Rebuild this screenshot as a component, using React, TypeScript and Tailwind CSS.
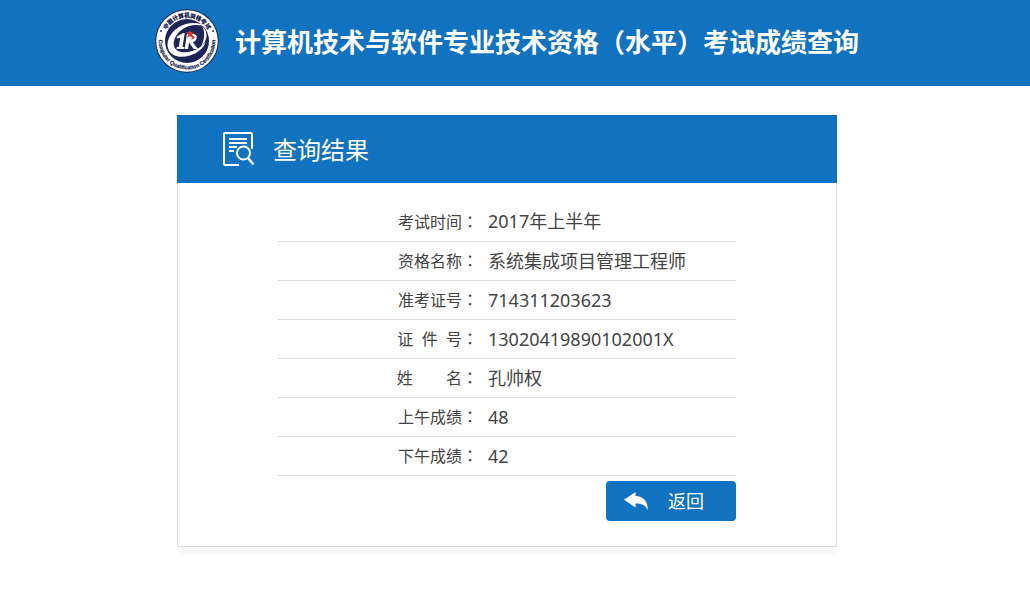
import React from "react";

type Row = { label: string; value: string };

const rows: Row[] = [
  { label: "考试时间", value: "2017年上半年" },
  { label: "资格名称", value: "系统集成项目管理工程师" },
  { label: "准考证号", value: "714311203623" },
  { label: "证\u00a0\u00a0件\u00a0\u00a0号", value: "13020419890102001X" },
  { label: "姓\u00a0\u00a0\u00a0\u00a0\u00a0\u00a0\u00a0\u00a0名", value: "孔帅权" },
  { label: "上午成绩", value: "48" },
  { label: "下午成绩", value: "42" },
];

function Seal() {
  return (
    <svg viewBox="0 0 64 64" className="h-16 w-16 shrink-0" role="img" aria-label="中国计算机资格考试">
      <defs>
        <path id="arc-top" d="M9.1 36 A23.3 23.3 0 1 1 54.9 36" />
        <path id="arc-bottom" d="M4.6 25.5 A28.2 28.2 0 1 0 59.4 25.5" />
      </defs>
      <circle cx="32" cy="32" r="31.7" fill="#1b2350" />
      <circle cx="32" cy="32" r="30.8" fill="#fff" />
      <text
        fontSize="5.6"
        fontWeight="900"
        fill="#1b2350"
        stroke="#1b2350"
        strokeWidth="0.2"
        textAnchor="middle"
        fontFamily="'Noto Sans CJK SC', sans-serif"
      >
        <textPath href="#arc-top" startOffset="50%">
          中国计算机资格考试
        </textPath>
      </text>
      <text
        fontSize="5.3"
        fontWeight="700"
        fill="#1b2350"
        stroke="#1b2350"
        strokeWidth="0.2"
        textAnchor="middle"
        fontFamily="'Liberation Sans', sans-serif"
      >
        <textPath href="#arc-bottom" startOffset="50%">
          Computer Qualification Certification
        </textPath>
      </text>
      <circle cx="6" cy="22" r="0.9" fill="#1b2350" />
      <circle cx="58" cy="22" r="0.9" fill="#1b2350" />
      <circle cx="32" cy="32" r="22" fill="#1d2456" />
      <path
        d="M53.500 19.500 C46 12.500 33 12.500 24 18 C14 24 9.500 35 14.500 42.500 C19.500 49.500 32 49 41 44 C46 41 49.500 37 50.500 33 C46 38.500 40 42 33 43 C25 44.200 19.500 41.500 18.800 36 C18 29.500 23 21.800 31.500 18 C39 15 47 15.500 53.500 19.500 Z"
        fill="#fff"
      />
      <path d="M47 17 C53.500 23 53 31 46 37.500 C49.500 31 50.500 23 47 17 Z" fill="#fff" />
      <path
        d="M22 27.500 L28 24 H29.800 L27.500 38 H29.500 L29.200 40 H21.500 L21.800 38 H23.800 L25.200 28.800 L21.800 29.500 Z"
        fill="#fff"
      />
      <path
        d="M31.800 25 H37.500 C41.500 25 42.300 27.500 41.500 29.800 C40.900 31.600 39.700 32.700 37.800 33.200 L43 40 H38.600 L34 33.500 L33 40 H29.800 Z"
        fill="#fff"
      />
      <path d="M31 23.500 L35 22.200 L39.500 24.500 L36.800 25.600 L40 28.500 L36.500 31 L36.800 28.500 L34.500 27 L32 29 L33.300 25.200 Z" fill="#d6362f" />
    </svg>
  );
}

function SearchDocIcon() {
  return (
    <svg viewBox="0 0 32 36" className="h-9 w-8 shrink-0" fill="none" stroke="#fff" strokeWidth="2" aria-hidden="true">
      <path d="M29 18 V3 Q29 2 28 2 H2 Q1 2 1 3 V33 Q1 34 2 34 H16" />
      <path d="M6 8 H24 M6 12 H24 M6 16 H14 M6 20 H11" />
      <circle cx="20.500" cy="22" r="6.500" />
      <path d="M25 27 L30.500 33.500" strokeWidth="2.500" />
    </svg>
  );
}

function ReplyIcon() {
  return (
    <svg viewBox="0 0 24 18" className="h-[18px] w-6 shrink-0" fill="#fff" aria-hidden="true">
      <path d="M0 7.800 L11.500 0 V4 C19 4.200 24 9 23.800 18 C21.500 13.300 17.500 11.600 11.500 11.600 V15.600 Z" />
    </svg>
  );
}

export default function App() {
  return (
    <div className="min-h-screen bg-white font-['Noto_Sans','Noto_Sans_CJK_SC',sans-serif] text-[#444]">
      <header className="bg-[#1172c0] pr-4">
        <div className="flex h-[86px] items-center justify-center gap-4 pb-1">
          <Seal />
          <h1 className="whitespace-nowrap font-['Noto_Sans_CJK_SC',sans-serif] text-[26px] font-bold leading-10 text-white">
            计算机技术与软件专业技术资格（水平）考试成绩查询
          </h1>
        </div>
      </header>

      <main className="pr-4 pt-[29px]">
        <section className="mx-auto w-full max-w-[660px] shadow-[0_8px_4px_-2px_#f4f4f4]">
          <div className="flex h-[68px] items-center gap-[18px] bg-[#1172c0] pl-[46px] text-white">
            <SearchDocIcon />
            <h2 className="pt-0.5 text-2xl leading-9">查询结果</h2>
          </div>

          <div className="border border-t-0 border-[#ddd] px-[100px] pb-[25px] pt-[19px]">
            <table className="w-full border-collapse">
              <tbody>
                {rows.map((row) => (
                  <tr key={row.label} className="h-[39px] border-b border-[#dcdcdc]">
                    <th scope="row" className="w-[200px] p-0 text-right text-base font-normal leading-6">
                      {row.label}
                      <span className="font-['Noto_Sans_CJK_TC',sans-serif]">：</span>
                    </th>
                    <td className="py-0 pl-2.5 pr-0 text-lg leading-6">{row.value}</td>
                  </tr>
                ))}
              </tbody>
            </table>
            <div className="mt-[5px] flex justify-end">
              <button
                type="button"
                onClick={() => window.history.back()}
                className="flex h-10 w-[130px] cursor-pointer items-center gap-5 rounded bg-[#1172c0] pl-[18px] text-lg leading-6 text-white"
              >
                <ReplyIcon />
                返回
              </button>
            </div>
          </div>
        </section>
      </main>
    </div>
  );
}
